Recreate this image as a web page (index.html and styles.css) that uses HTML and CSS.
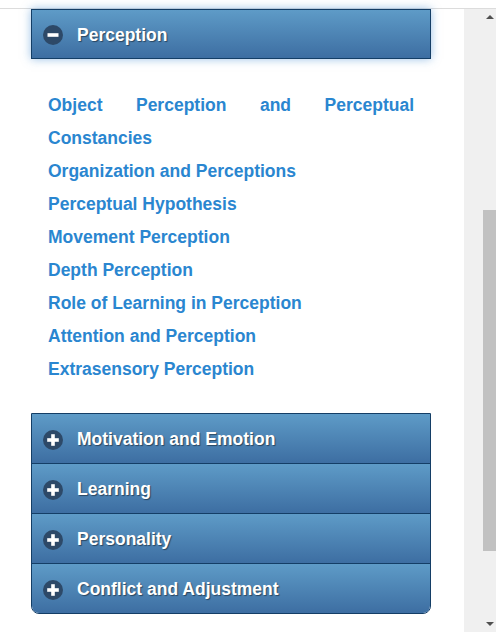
FILE: index.html
```html
<!DOCTYPE html>
<html lang="en">
<head>
    <meta charset="UTF-8">
    <meta name="viewport" content="width=device-width, initial-scale=1.0">
    <title>Psychology - Topics</title>
    <link rel="stylesheet" href="styles.css">
</head>
<body>
    <div class="top-gap"></div>
    <div class="frame">
        <main class="content">
            <div class="accordion">
                <div class="acc-header active">
                    <svg class="acc-icon" viewBox="0 0 20 20" width="20" height="20">
                        <circle cx="10" cy="10" r="10" fill="#2d4968"/>
                        <rect x="4.5" y="8.2" width="11" height="3.6" fill="#fff"/>
                    </svg>
                    <span>Perception</span>
                </div>
                <ul class="acc-panel">
                    <li><a href="#">Object Perception and Perceptual Constancies</a></li>
                    <li><a href="#">Organization and Perceptions</a></li>
                    <li><a href="#">Perceptual Hypothesis</a></li>
                    <li><a href="#">Movement Perception</a></li>
                    <li><a href="#">Depth Perception</a></li>
                    <li><a href="#">Role of Learning in Perception</a></li>
                    <li><a href="#">Attention and Perception</a></li>
                    <li><a href="#">Extrasensory Perception</a></li>
                </ul>

                <div class="acc-group">
                    <div class="acc-header">
                        <svg class="acc-icon" viewBox="0 0 20 20" width="20" height="20">
                            <circle cx="10" cy="10" r="10" fill="#2d4968"/>
                            <rect x="4.2" y="8.2" width="11.6" height="3.6" fill="#fff"/>
                            <rect x="8.2" y="4.2" width="3.6" height="11.6" fill="#fff"/>
                        </svg>
                        <span>Motivation and Emotion</span>
                    </div>
                    <div class="acc-header">
                        <svg class="acc-icon" viewBox="0 0 20 20" width="20" height="20">
                            <circle cx="10" cy="10" r="10" fill="#2d4968"/>
                            <rect x="4.2" y="8.2" width="11.6" height="3.6" fill="#fff"/>
                            <rect x="8.2" y="4.2" width="3.6" height="11.6" fill="#fff"/>
                        </svg>
                        <span>Learning</span>
                    </div>
                    <div class="acc-header">
                        <svg class="acc-icon" viewBox="0 0 20 20" width="20" height="20">
                            <circle cx="10" cy="10" r="10" fill="#2d4968"/>
                            <rect x="4.2" y="8.2" width="11.6" height="3.6" fill="#fff"/>
                            <rect x="8.2" y="4.2" width="3.6" height="11.6" fill="#fff"/>
                        </svg>
                        <span>Personality</span>
                    </div>
                    <div class="acc-header">
                        <svg class="acc-icon" viewBox="0 0 20 20" width="20" height="20">
                            <circle cx="10" cy="10" r="10" fill="#2d4968"/>
                            <rect x="4.2" y="8.2" width="11.6" height="3.6" fill="#fff"/>
                            <rect x="8.2" y="4.2" width="3.6" height="11.6" fill="#fff"/>
                        </svg>
                        <span>Conflict and Adjustment</span>
                    </div>
                </div>
            </div>
        </main>

        <div class="scroll-strip">
            <div class="scroll-col">
                <div class="arrow-up"></div>
                <div class="thumb"></div>
                <div class="arrow-down"></div>
            </div>
        </div>
    </div>
</body>
</html>
```

FILE: styles.css
```css
body {
    margin: 0;
    padding: 0;
    font-family: "Liberation Sans", Arial, sans-serif;
    background-color: #fff;
    height: 632px;
    overflow: hidden;
}

.top-gap {
    height: 8px;
}

.frame {
    display: flex;
    border-top: 1px solid #dcdcdc;
    height: 623px;
}

.content {
    width: 464px;
    padding-left: 31px;
    box-sizing: border-box;
}

.accordion {
    width: 400px;
}

.acc-header {
    display: flex;
    align-items: center;
    gap: 14px;
    height: 49px;
    box-sizing: border-box;
    padding: 2px 0 0 11px;
    background: linear-gradient(to bottom, #5e9bc7, #3d6ea2);
    color: #fff;
    font-size: 17.5px;
    font-weight: bold;
    text-shadow: 1px 1px 1px rgba(0, 0, 0, 0.45);
}

.acc-header.active {
    height: 50px;
    border: 1px solid #143e66;
    box-shadow: 0 0 9px rgba(70, 140, 210, 0.55);
}

.acc-icon {
    flex-shrink: 0;
}

.acc-panel {
    list-style: none;
    margin: 0;
    padding: 30px 17px 27px;
}

.acc-panel li {
    line-height: 33px;
    text-align: justify;
}

.acc-panel a {
    color: #2a86d0;
    font-size: 17.5px;
    font-weight: bold;
    text-decoration: none;
}

.acc-group {
    border: 1px solid #143e66;
    border-radius: 0 0 8px 8px;
    overflow: hidden;
}

.acc-group .acc-header + .acc-header {
    height: 50px;
    border-top: 1px solid #143e66;
}

.scroll-strip {
    width: 32px;
    background-color: #f0f0f0;
    padding-left: 19px;
    box-sizing: border-box;
}

.scroll-col {
    width: 13px;
    height: 100%;
    display: flex;
    flex-direction: column;
    align-items: center;
}

.arrow-up {
    width: 0;
    height: 0;
    margin-top: 6px;
    border-left: 4px solid transparent;
    border-right: 4px solid transparent;
    border-bottom: 4px solid #505050;
}

.thumb {
    width: 13px;
    height: 341px;
    margin-top: 191px;
    background-color: #c1c1c1;
}

.arrow-down {
    width: 0;
    height: 0;
    margin-top: auto;
    margin-bottom: 6px;
    border-left: 4px solid transparent;
    border-right: 4px solid transparent;
    border-top: 4px solid #505050;
}
```
